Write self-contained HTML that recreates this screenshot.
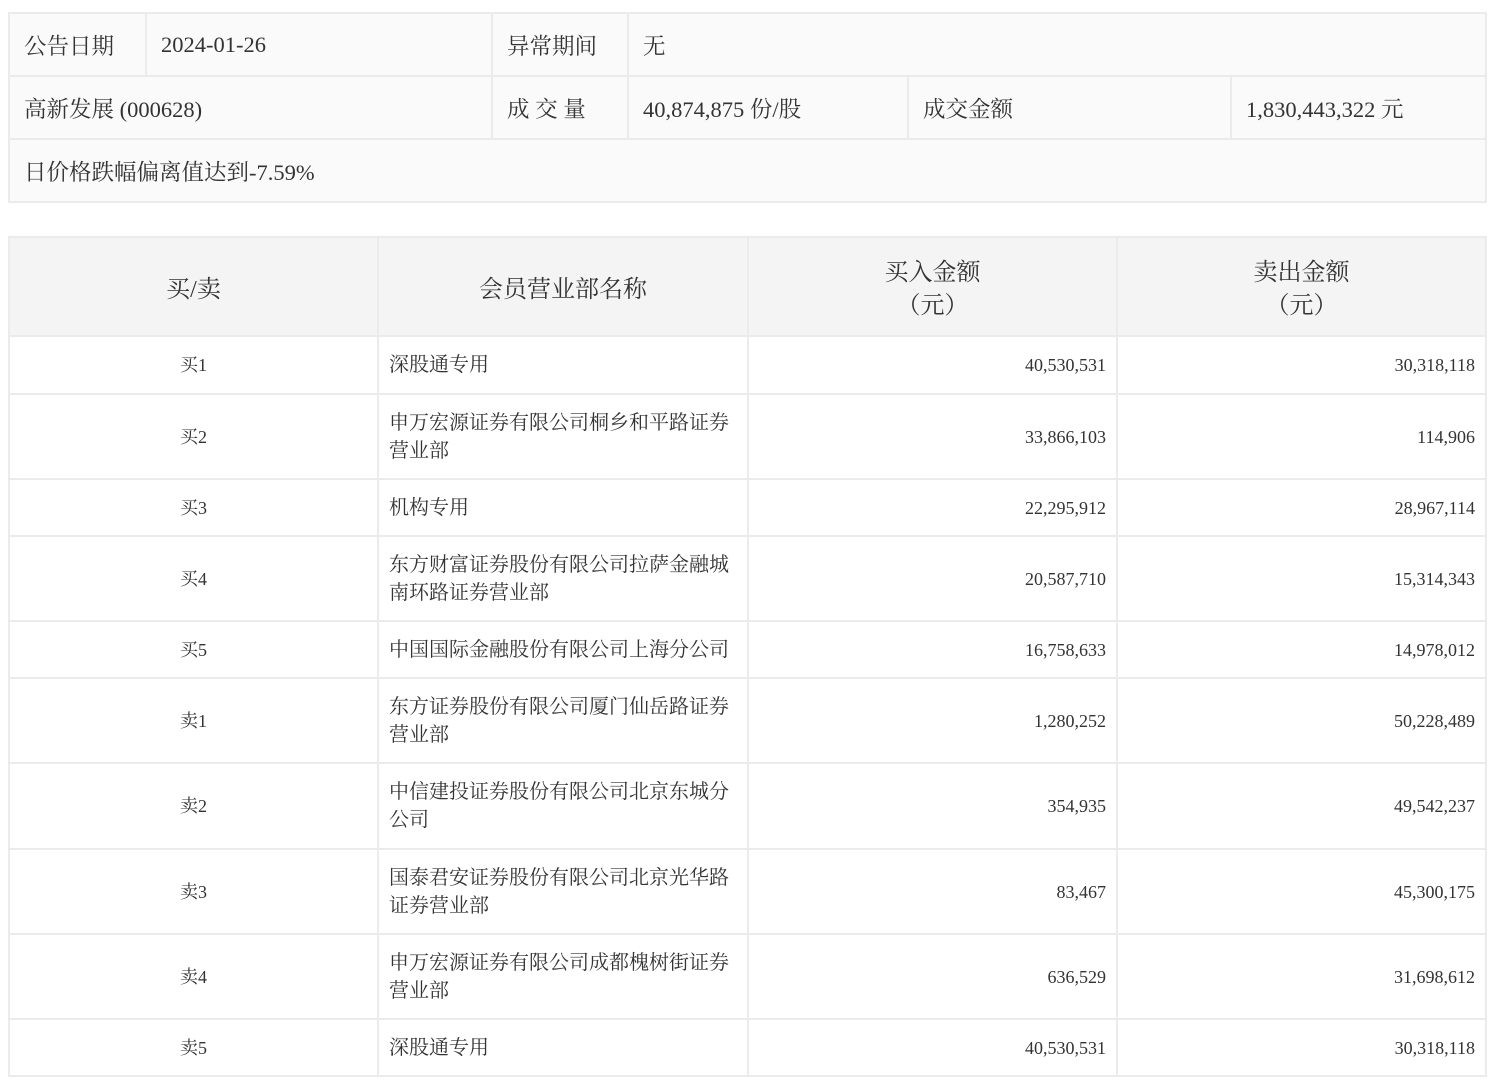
<!DOCTYPE html>
<html><head><meta charset="utf-8"><style>
body{margin:0;background:#fff;font-family:"Liberation Serif","Noto Serif CJK SC",serif;color:#333;width:1492px;height:1086px;overflow:hidden;position:relative}
table{border-collapse:collapse;position:absolute;left:8px;table-layout:fixed}
td,th{border:2px solid #ebebeb;padding:0;box-sizing:border-box}
.t1{top:12px;width:1477px;background:#fafafa;font-size:22.5px}
.t1 td{padding-left:14px;height:63px}
.t2{top:236px;width:1477px;font-size:18px}
.t2 th{background:#f4f4f4;font-weight:normal;font-size:24px;height:99px;line-height:33px;padding-top:7px}
.t2 td{padding:0 10px;line-height:28px}
.t2 td.n{padding-right:10px;font-size:20px}
.c{text-align:center}.r{text-align:right}
</style></head><body>
<table class="t1">
<colgroup><col style="width:137px"><col style="width:346px"><col style="width:136px"><col style="width:280px"><col style="width:323px"><col style="width:255px"></colgroup>
<tr><td>公告日期</td><td>2024-01-26</td><td>异常期间</td><td colspan="3">无</td></tr>
<tr><td colspan="2">高新发展 (000628)</td><td>成 交 量</td><td>40,874,875 份/股</td><td>成交金额</td><td>1,830,443,322 元</td></tr>
<tr><td colspan="6">日价格跌幅偏离值达到-7.59%</td></tr>
</table>
<table class="t2">
<colgroup><col style="width:369px"><col style="width:370px"><col style="width:369px"><col style="width:369px"></colgroup>
<tr><th>买/卖</th><th>会员营业部名称</th><th>买入金额<br>（元）</th><th>卖出金额<br>（元）</th></tr>
<tr style="height:58px"><td class="c">买1</td><td class="n">深股通专用</td><td class="r">40,530,531</td><td class="r">30,318,118</td></tr>
<tr style="height:85px"><td class="c">买2</td><td class="n">申万宏源证券有限公司桐乡和平路证券<br>营业部</td><td class="r">33,866,103</td><td class="r">114,906</td></tr>
<tr style="height:57px"><td class="c">买3</td><td class="n">机构专用</td><td class="r">22,295,912</td><td class="r">28,967,114</td></tr>
<tr style="height:85px"><td class="c">买4</td><td class="n">东方财富证券股份有限公司拉萨金融城<br>南环路证券营业部</td><td class="r">20,587,710</td><td class="r">15,314,343</td></tr>
<tr style="height:57px"><td class="c">买5</td><td class="n">中国国际金融股份有限公司上海分公司</td><td class="r">16,758,633</td><td class="r">14,978,012</td></tr>
<tr style="height:85px"><td class="c">卖1</td><td class="n">东方证券股份有限公司厦门仙岳路证券<br>营业部</td><td class="r">1,280,252</td><td class="r">50,228,489</td></tr>
<tr style="height:86px"><td class="c">卖2</td><td class="n">中信建投证券股份有限公司北京东城分<br>公司</td><td class="r">354,935</td><td class="r">49,542,237</td></tr>
<tr style="height:85px"><td class="c">卖3</td><td class="n">国泰君安证券股份有限公司北京光华路<br>证券营业部</td><td class="r">83,467</td><td class="r">45,300,175</td></tr>
<tr style="height:85px"><td class="c">卖4</td><td class="n">申万宏源证券有限公司成都槐树街证券<br>营业部</td><td class="r">636,529</td><td class="r">31,698,612</td></tr>
<tr style="height:57px"><td class="c">卖5</td><td class="n">深股通专用</td><td class="r">40,530,531</td><td class="r">30,318,118</td></tr>
</table>
</body></html>
